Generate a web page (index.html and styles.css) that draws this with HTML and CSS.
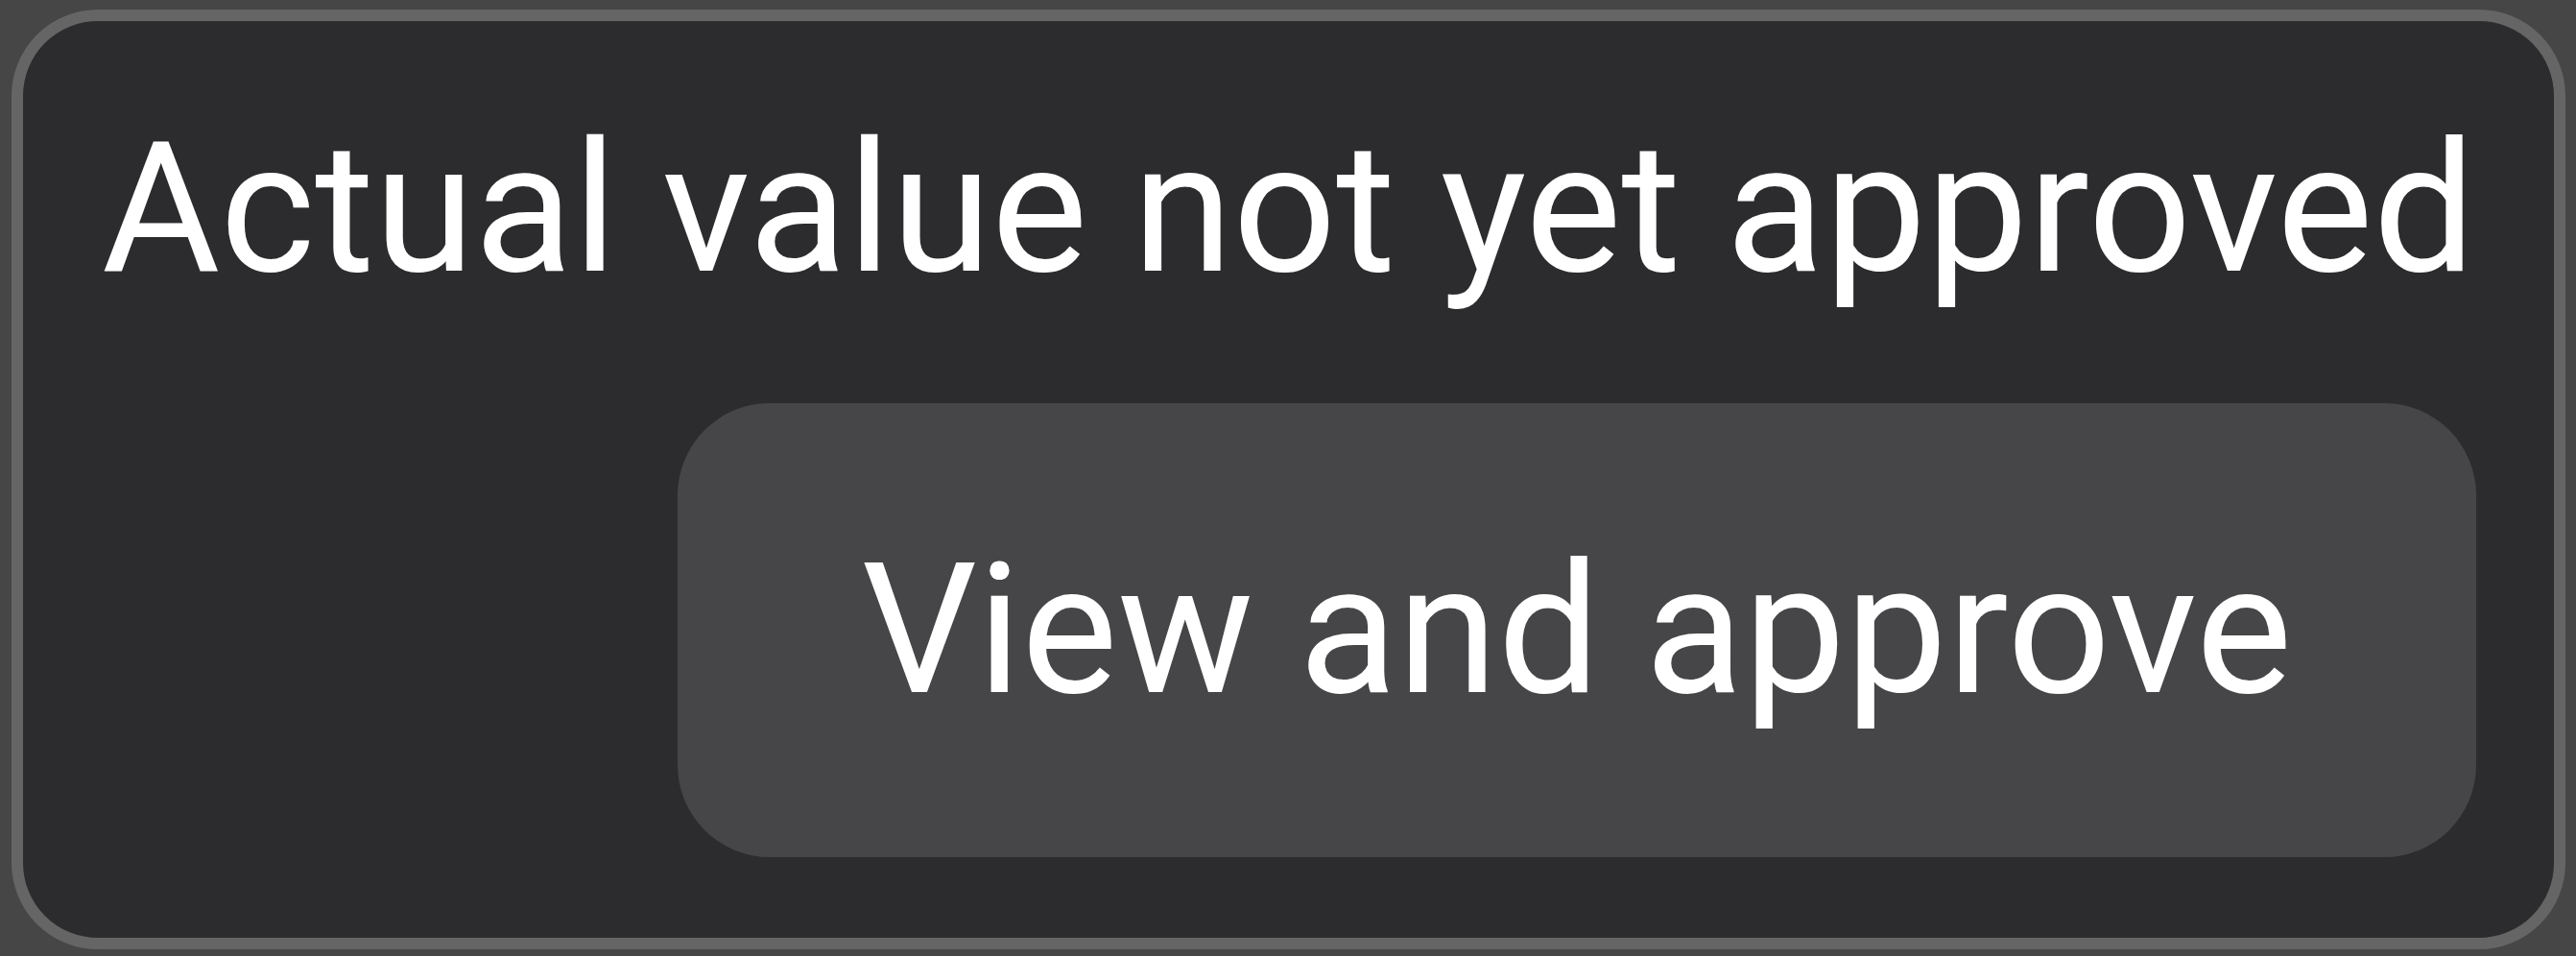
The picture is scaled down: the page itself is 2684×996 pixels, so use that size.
FILE: index.html
```html
<!DOCTYPE html>
<html lang="en">
<head>
  <meta charset="UTF-8" />
  <meta name="viewport" content="width=device-width, initial-scale=1.0"/>
  <title>Approval</title>
  <link rel="stylesheet" href="styles.css">
</head>
<body>
  <!-- Aviso de valor pendiente -->
  <div class="tarjeta">
    <p class="titulo">Actual value not yet approved</p>
    <div class="acciones">
      <button class="aprobar-btn">View and approve</button>
    </div>
  </div>
</body>
</html>
```

FILE: styles.css
```css
html, body {
  height: 100%;
}
body {
  font-family: Roboto, "Noto Sans", sans-serif;
  background: #464646;
  color: #ffffff;
  margin: 0;
  padding: 10px 11px 7px 12px;
  box-sizing: border-box;
}
.tarjeta {
  height: 100%;
  box-sizing: border-box;
  background: #2c2c2e;
  border: 12px solid #656565;
  border-radius: 90px;
  padding: 85px 81px 83px 0;
  display: flex;
  flex-direction: column;
}
.titulo {
  margin: 0 0 0 81px;
  font-size: 189px;
  line-height: normal;
  text-align: center;
  white-space: nowrap;
}
.acciones {
  display: flex;
  justify-content: flex-end;
  margin-top: 92px;
}
.aprobar-btn {
  width: 1874px;
  height: 473px;
  padding: 0;
  border: none;
  border-radius: 96px;
  background: #464648;
  color: #ffffff;
  font-family: Roboto, "Noto Sans", sans-serif;
  font-size: 189px;
  cursor: pointer;
}
```
